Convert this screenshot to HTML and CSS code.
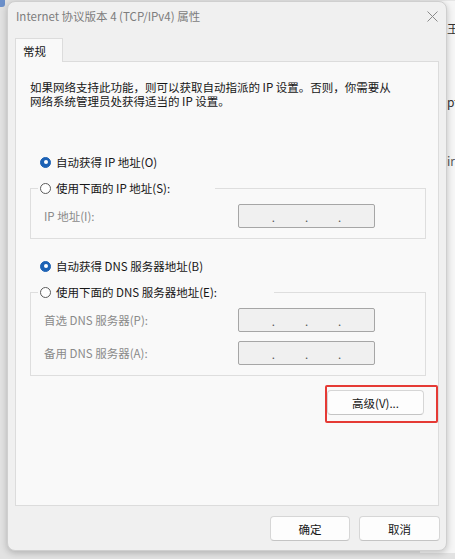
FILE: index.html
```html
<!DOCTYPE html>
<html lang="zh-CN">
<head>
<meta charset="utf-8">
<title>Internet 协议版本 4 (TCP/IPv4) 属性</title>
<link rel="stylesheet" href="styles.css">
</head>
<body>
<div class="bgwin">
  <div class="bg-line l1">王</div>
  <div class="bg-line l2">pt</div>
  <div class="bg-line l3">ir</div>
</div>
<div class="bgicon"></div>

<div class="dialog">
  <div class="titlebar">
    <span class="title">Internet 协议版本 4 (TCP/IPv4) 属性</span>
    <svg class="close" width="11" height="11" viewBox="0 0 11 11"><path d="M0.5 0.5 L10.5 10.5 M10.5 0.5 L0.5 10.5" stroke="#8a8a8a" stroke-width="1" fill="none"/></svg>
  </div>

  <div class="tabs"><div class="tab">常规</div></div>

  <div class="panel">
    <p class="intro">如果网络支持此功能，则可以获取自动指派的 IP 设置。否则，你需要从<br>网络系统管理员处获得适当的 IP 设置。</p>

    <div class="radio-row first"><span class="radio on"></span><span>自动获得 IP 地址(O)</span></div>

    <fieldset class="group">
      <legend class="legend ip"><span class="radio"></span><span>使用下面的 IP 地址(S):</span></legend>
      <div class="fields">
        <span class="lbl">IP 地址(I):</span>
        <span class="ipbox"><i>.</i><i>.</i><i>.</i></span>
      </div>
    </fieldset>

    <div class="radio-row dns"><span class="radio on"></span><span>自动获得 DNS 服务器地址(B)</span></div>

    <fieldset class="group dnsgroup">
      <legend class="legend dnsl"><span class="radio"></span><span>使用下面的 DNS 服务器地址(E):</span></legend>
      <div class="fields">
        <span class="lbl">首选 DNS 服务器(P):</span>
        <span class="ipbox"><i>.</i><i>.</i><i>.</i></span>
        <span class="lbl">备用 DNS 服务器(A):</span>
        <span class="ipbox"><i>.</i><i>.</i><i>.</i></span>
      </div>
    </fieldset>

    <div class="adv-row">
      <div class="adv-wrap">
        <button class="btn adv">高级(V)...</button>
        <span class="highlight"></span>
      </div>
    </div>
  </div>

  <div class="footer">
    <button class="btn ok">确定</button>
    <button class="btn cancel">取消</button>
  </div>
</div>
</body>
</html>
```

FILE: styles.css
```css
html, body {
  margin: 0;
  padding: 0;
}
body {
  width: 455px;
  height: 559px;
  overflow: hidden;
  position: relative;
  background: #e2e2e2;
  font-family: "Noto Sans CJK SC", "Noto Sans", sans-serif;
  font-size: 11.5px;
  color: #161616;
}

.bgwin {
  position: absolute;
  left: 420px;
  top: 0;
  width: 40px;
  height: 552px;
  background: #f6f6f6;
  border-top: 1px solid #e6e6e6;
}
.bg-line {
  position: absolute;
  left: 27px;
  font-size: 12px;
  color: #333;
}
.bg-line.l1 { top: 19px; }
.bg-line.l2 { top: 92px; }
.bg-line.l3 { top: 151px; color: #555; }

.bgicon {
  position: absolute;
  left: 0;
  top: 0;
  width: 5px;
  height: 7px;
  background: #6b8fc9;
  border-bottom-right-radius: 3px;
}

.dialog {
  position: relative;
  z-index: 1;
  box-sizing: border-box;
  margin: 1px 0 0 7px;
  width: 440px;
  height: 550px;
  background: #f0f0f0;
  border: 1px solid #cfcfcf;
  border-radius: 8px;
  box-shadow: 0 2px 7px rgba(0, 0, 0, 0.22);
  display: flex;
  flex-direction: column;
}

.titlebar {
  height: 28px;
  display: flex;
  align-items: center;
  justify-content: space-between;
  padding: 0 8px 0 8px;
}
.title {
  color: #7d7d7d;
  font-size: 11.5px;
}
.close {
  display: block;
}

.tabs {
  margin-top: 8px;
  padding-left: 7px;
  display: flex;
}
.tab {
  position: relative;
  z-index: 1;
  box-sizing: border-box;
  width: 48px;
  height: 24px;
  margin-bottom: -1px;
  padding: 4px 0 0 7px;
  background: #f9f9f9;
  border: 1px solid #dcdcdc;
  border-bottom: none;
  color: #161616;
}

.panel {
  box-sizing: border-box;
  margin: 0 7px 0 7px;
  height: 445px;
  background: #f9f9f9;
  border: 1px solid #dcdcdc;
  padding: 19px 0 0 14px;
}

.intro {
  margin: 0;
  line-height: 13.5px;
}

.radio-row {
  display: flex;
  align-items: center;
  gap: 5px;
  height: 16px;
  margin-left: 10px;
}
.radio-row.first { margin-top: 46px; }
.radio-row.dns { margin-top: 19px; }

.radio {
  box-sizing: border-box;
  width: 11px;
  height: 11px;
  border-radius: 50%;
  border: 1px solid #5c5c5c;
  background: #fff;
  flex: none;
  display: flex;
  align-items: center;
  justify-content: center;
}
.radio.on {
  background: #1d62b5;
  border-color: #1d62b5;
}
.radio.on::after {
  content: "";
  width: 4px;
  height: 4px;
  border-radius: 50%;
  background: #fff;
}

.group {
  box-sizing: border-box;
  width: 396px;
  margin: 10px 0 0 0;
  padding: 8px 0 10px 7px;
  border: 1px solid #dedede;
  min-width: 0;
}
.legend {
  box-sizing: border-box;
  height: 16px;
  padding: 0 0 0 2px;
  display: flex;
  align-items: center;
  gap: 5px;
}
.legend.ip { width: 177px; }
.legend.dnsl { width: 236px; }

.fields {
  display: grid;
  grid-template-columns: 194px 137px;
  row-gap: 9px;
  align-items: center;
  margin-left: 6px;
}
.lbl {
  color: #8a8a8a;
}
.ipbox {
  box-sizing: border-box;
  height: 24px;
  border: 1px solid #a6a6a6;
  border-radius: 2px;
  background: #f0f0f0;
  display: flex;
  justify-content: center;
  align-items: center;
  gap: 30px;
}
.ipbox i {
  font-style: normal;
  color: #555;
  line-height: 1;
  padding-top: 3px;
}

.adv-row {
  display: flex;
  justify-content: flex-end;
  width: 394px;
  margin-top: 14px;
}
.adv-wrap {
  position: relative;
}

.btn {
  box-sizing: border-box;
  font-family: inherit;
  font-size: 11.5px;
  color: #161616;
  background: #fdfdfd;
  border: 1px solid #d6d6d6;
  border-bottom-color: #c4c4c4;
  border-radius: 4px;
  height: 25px;
  padding: 0;
  display: block;
}
.btn.adv { width: 97px; }

.highlight {
  position: absolute;
  left: -2px;
  top: -5px;
  right: -14px;
  bottom: -8px;
  border: 2px solid #e53a35;
  border-radius: 2px;
}

.footer {
  display: flex;
  justify-content: flex-end;
  gap: 9px;
  padding: 10px 6px 0 0;
}
.btn.ok { width: 80px; }
.btn.cancel { width: 81px; }
```
